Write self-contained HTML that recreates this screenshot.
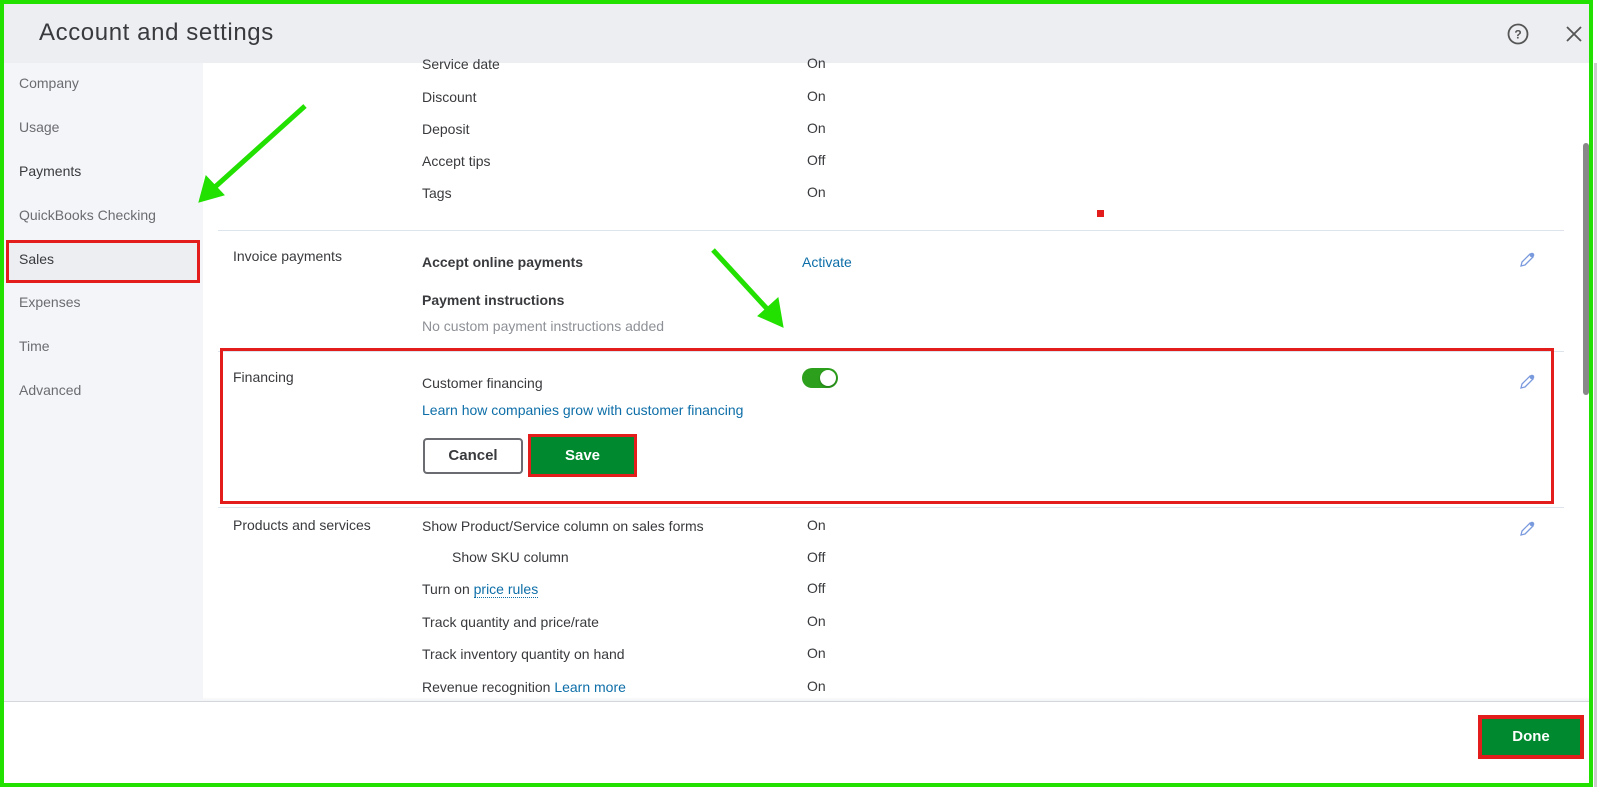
<!DOCTYPE html>
<html><head><meta charset="utf-8"><style>
*{margin:0;padding:0;box-sizing:border-box}
body{width:1597px;height:787px;background:#fff;font-family:"Liberation Sans",sans-serif;position:relative;overflow:hidden;color:#393a3d;font-size:14px}
.a{position:absolute;white-space:nowrap}
.lbl{color:#393a3d}
.side{color:#6b6c72;font-size:14px}
.val{color:#393a3d}
.link{color:#0d6ea8}
.b{font-weight:bold}
.pen{position:absolute;width:18px;height:18px}
</style></head><body>
<!-- header -->
<div class="a" style="left:4px;top:4px;width:1585px;height:59px;background:#eceef1"></div>
<div class="a" style="left:39px;top:19px;font-size:24px;letter-spacing:0.6px;color:#393a3d">Account and settings</div>
<svg class="a" style="left:1507px;top:23px" width="22" height="22" viewBox="0 0 22 22"><circle cx="11" cy="11" r="9.5" fill="none" stroke="#555" stroke-width="1.8"/><text x="11" y="15.5" text-anchor="middle" font-family="Liberation Sans" font-weight="bold" font-size="12" fill="#555">?</text></svg>
<svg class="a" style="left:1566px;top:26px" width="16" height="16" viewBox="0 0 16 16"><path d="M1 1L15 15M15 1L1 15" stroke="#555" stroke-width="1.8"/></svg>
<!-- sidebar -->
<div class="a" style="left:4px;top:63px;width:199px;height:638px;background:#f4f5f8"></div>
<div class="a" style="left:6px;top:240px;width:194px;height:43px;background:#eceef1;border:3px solid #e31c1c"></div>
<div class="a side" style="left:19px;top:75px">Company</div>
<div class="a side" style="left:19px;top:119px">Usage</div>
<div class="a side" style="left:19px;top:163px;color:#393a3d">Payments</div>
<div class="a side" style="left:19px;top:207px">QuickBooks Checking</div>
<div class="a side" style="left:19px;top:251px;color:#393a3d">Sales</div>
<div class="a side" style="left:19px;top:294px">Expenses</div>
<div class="a side" style="left:19px;top:338px">Time</div>
<div class="a side" style="left:19px;top:382px">Advanced</div>
<!-- top rows -->
<div class="a lbl" style="left:422px;top:56px">Service date</div><div class="a val" style="left:807px;top:55px">On</div>
<div class="a lbl" style="left:422px;top:89px">Discount</div><div class="a val" style="left:807px;top:88px">On</div>
<div class="a lbl" style="left:422px;top:121px">Deposit</div><div class="a val" style="left:807px;top:120px">On</div>
<div class="a lbl" style="left:422px;top:153px">Accept tips</div><div class="a val" style="left:807px;top:152px">Off</div>
<div class="a lbl" style="left:422px;top:185px">Tags</div><div class="a val" style="left:807px;top:184px">On</div>
<div class="a" style="left:1097px;top:210px;width:7px;height:7px;background:#e31c1c"></div>
<div class="a" style="left:218px;top:230px;width:1346px;height:1px;background:#dde4ec"></div>
<!-- invoice payments -->
<div class="a lbl" style="left:233px;top:248px">Invoice payments</div>
<div class="a b" style="left:422px;top:254px">Accept online payments</div>
<div class="a link" style="left:802px;top:254px">Activate</div>
<div class="a b" style="left:422px;top:292px">Payment instructions</div>
<div class="a" style="left:422px;top:318px;color:#8d9096">No custom payment instructions added</div>
<div class="a" style="left:218px;top:351px;width:1346px;height:1px;background:#dde4ec"></div>
<!-- financing -->
<div class="a" style="left:220px;top:348px;width:1334px;height:156px;border:3px solid #e31c1c"></div>
<div class="a lbl" style="left:233px;top:369px">Financing</div>
<div class="a lbl" style="left:422px;top:375px">Customer financing</div>
<div class="a" style="left:802px;top:368px;width:36px;height:20px;border-radius:10px;background:#2ca01c"></div>
<div class="a" style="left:820px;top:370px;width:16px;height:16px;border-radius:50%;background:#fff;box-shadow:0 1px 2px rgba(0,0,0,.3)"></div>
<div class="a link" style="left:422px;top:402px">Learn how companies grow with customer financing</div>
<div class="a" style="left:423px;top:438px;width:100px;height:36px;border:2px solid #6b6c72;border-radius:4px;text-align:center;line-height:32px;font-weight:bold;font-size:15px">Cancel</div>
<div class="a" style="left:528px;top:434px;width:109px;height:43px;border:3px solid #e31c1c;background:#00892e;text-align:center;line-height:37px;font-weight:bold;font-size:15px;color:#fff">Save</div>
<div class="a" style="left:218px;top:507px;width:1346px;height:1px;background:#dde4ec"></div>
<!-- products -->
<div class="a lbl" style="left:233px;top:517px">Products and services</div>
<div class="a lbl" style="left:422px;top:518px">Show Product/Service column on sales forms</div><div class="a val" style="left:807px;top:517px">On</div>
<div class="a lbl" style="left:452px;top:549px">Show SKU column</div><div class="a val" style="left:807px;top:549px">Off</div>
<div class="a lbl" style="left:422px;top:581px">Turn on <span class="link" style="border-bottom:1px dotted #0d6ea8">price rules</span></div><div class="a val" style="left:807px;top:580px">Off</div>
<div class="a lbl" style="left:422px;top:614px">Track quantity and price/rate</div><div class="a val" style="left:807px;top:613px">On</div>
<div class="a lbl" style="left:422px;top:646px">Track inventory quantity on hand</div><div class="a val" style="left:807px;top:645px">On</div>
<div class="a lbl" style="left:422px;top:679px">Revenue recognition <span class="link">Learn more</span></div><div class="a val" style="left:807px;top:678px">On</div>
<!-- pencils -->
<svg class="pen" style="left:1518px;top:251px" viewBox="0 0 18 18"><path d="M3 15L4 11L12 3L15 6L7 14Z" fill="none" stroke="#7a9ade" stroke-width="1.3"/><circle cx="14" cy="4" r="2.3" fill="#7a9ade"/></svg>
<svg class="pen" style="left:1518px;top:373px" viewBox="0 0 18 18"><path d="M3 15L4 11L12 3L15 6L7 14Z" fill="none" stroke="#7a9ade" stroke-width="1.3"/><circle cx="14" cy="4" r="2.3" fill="#7a9ade"/></svg>
<svg class="pen" style="left:1518px;top:520px" viewBox="0 0 18 18"><path d="M3 15L4 11L12 3L15 6L7 14Z" fill="none" stroke="#7a9ade" stroke-width="1.3"/><circle cx="14" cy="4" r="2.3" fill="#7a9ade"/></svg>
<!-- footer -->
<div class="a" style="left:203px;top:697px;width:1386px;height:4px;background:linear-gradient(rgba(255,255,255,0),#f1f2f4)"></div>
<div class="a" style="left:4px;top:701px;width:1585px;height:86px;background:#fff"></div>
<div class="a" style="left:4px;top:701px;width:1585px;height:1px;background:#d4d7dc"></div>
<div class="a" style="left:1478px;top:715px;width:106px;height:44px;border:4px solid #e31c1c;background:#00892e;text-align:center;line-height:36px;font-weight:bold;font-size:15px;color:#fff">Done</div>
<!-- scrollbar -->
<div class="a" style="left:1583px;top:143px;width:6px;height:252px;background:#888;border-radius:3px"></div>
<div class="a" style="left:1594px;top:63px;width:3px;height:724px;background:#ccc"></div>
<!-- green frame -->
<div class="a" style="left:0;top:0;width:1593px;height:787px;border:4px solid #22e000"></div>
<!-- arrows -->
<svg class="a" style="left:0;top:0" width="1597" height="787"><g stroke="#22e000" stroke-width="5" fill="#22e000"><line x1="305" y1="106" x2="215" y2="187"/><polygon points="199,202 206,176 224,195" stroke-width="1"/><line x1="713" y1="250" x2="770" y2="312"/><polygon points="783,327 758,316 778,298" stroke-width="1"/></g></svg>
</body></html>
